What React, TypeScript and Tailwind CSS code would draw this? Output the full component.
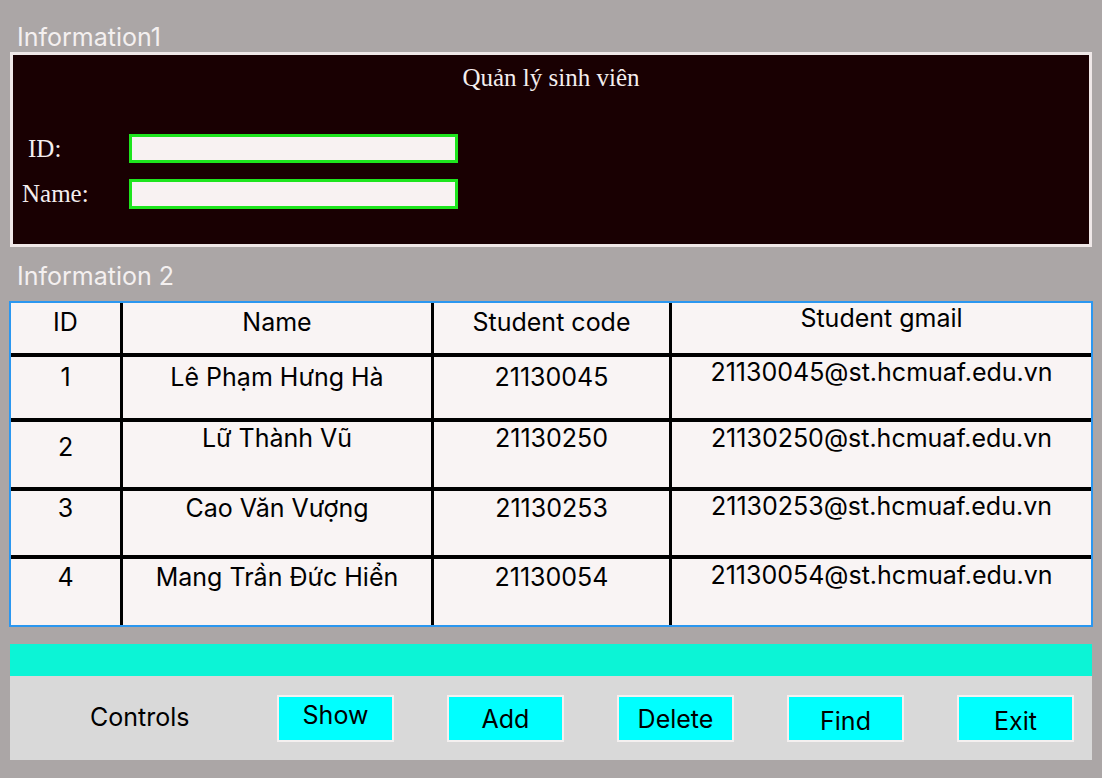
const students = [
  { id: '1', name: 'Lê Phạm Hưng Hà', code: '21130045', h: 'h-[65px]', pt: 'pt-[5px]', idPt: 'pt-[5px]', mailPt: 'pt-0' },
  { id: '2', name: 'Lữ Thành Vũ', code: '21130250', h: 'h-[69px]', pt: 'pt-[1px]', idPt: 'pt-[10px]', mailPt: 'pt-[1px]' },
  { id: '3', name: 'Cao Văn Vượng', code: '21130253', h: 'h-[68px]', pt: 'pt-[2px]', idPt: 'pt-[2px]', mailPt: 'pt-0' },
  { id: '4', name: 'Mang Trần Đức Hiển', code: '21130054', h: 'h-[66px]', pt: 'pt-[3px]', idPt: 'pt-[3px]', mailPt: 'pt-[1px]' },
];

const buttons = ['Show', 'Add', 'Delete', 'Find', 'Exit'];

function Row({
  cells,
  pads,
  className,
}: {
  cells: React.ReactNode[];
  pads: string[];
  className: string;
}) {
  return (
    <div className={`grid grid-cols-[109px_311px_238px_1fr] ${className}`}>
      {cells.map((c, i) => (
        <div key={i} className={`text-center ${pads[i]} ${i > 0 ? 'border-l-[3px] border-black' : ''}`}>
          {c}
        </div>
      ))}
    </div>
  );
}

export default function App() {
  return (
    <div
      className="w-[1102px] h-[778px] bg-[#aba6a6] px-[10px] pt-[22px] overflow-hidden"
      style={{ fontFamily: 'Inter, "Noto Sans", sans-serif' }}
    >
      <div className="h-[30px] pl-[7px] text-[25px] leading-[30px] text-[#f4f0f0]">Information1</div>

      <section
        className="h-[195px] border-[3px] border-[#efe8e8] bg-[#190002] text-[#f4eeee]"
        style={{ fontFamily: '"Liberation Serif", "Times New Roman", serif' }}
      >
        <div className="pt-[8px] h-[38px] text-center text-[25px] leading-[30px]">Quản lý sinh viên</div>
        <div className="mt-[41px] flex items-center h-[29px]">
          <span className="w-[116px] pl-[15px] text-[25px]">ID:</span>
          <div className="w-[329px] h-[29px] border-[3px] border-[#1ee51e] bg-[#f8f2f2]" />
        </div>
        <div className="mt-[16px] flex items-center h-[30px]">
          <span className="w-[116px] pl-[9px] text-[25px]">Name:</span>
          <div className="w-[329px] h-[30px] border-[3px] border-[#1ee51e] bg-[#f8f2f2]" />
        </div>
      </section>

      <div className="h-[54px] pl-[7px] text-[25px] leading-[58px] text-[#f4f0f0]">Information 2</div>

      <section className="-mx-px border-2 border-[#2b97f0] bg-[#f9f4f4] text-black text-[25px] leading-[30px]">
        <Row
          className="h-[54px] border-b-4 border-b-black"
          pads={['pt-[4px]', 'pt-[4px]', 'pt-[4px]', 'pt-0']}
          cells={['ID', 'Name', 'Student code', 'Student gmail']}
        />
        {students.map((s, i) => (
          <Row
            key={s.id}
            className={`${s.h} ${i < 3 ? 'border-b-4 border-b-black' : ''}`}
            pads={[s.idPt, s.pt, s.pt, s.mailPt]}
            cells={[s.id, s.name, s.code, `${s.code}@st.hcmuaf.edu.vn`]}
          />
        ))}
      </section>

      <div className="mt-[17px] h-[32px] bg-[#0cf4d6]" />
      <div className="h-[84px] bg-[#d9d9d9] flex items-center pl-[80px] text-[25px] text-black">
        <span className="w-[187px]">Controls</span>
        <div className="flex gap-[53px]">
          {buttons.map((b, i) => (
            <button
              key={b}
              className={`w-[117px] h-[47px] border-2 border-[#f4f0f0] bg-[#00ffff] leading-[30px] ${
                i === 0 ? 'pb-[6px]' : i >= 3 ? 'pt-[6px]' : 'pt-[1px]'
              }`}
            >
              {b}
            </button>
          ))}
        </div>
      </div>
    </div>
  );
}
